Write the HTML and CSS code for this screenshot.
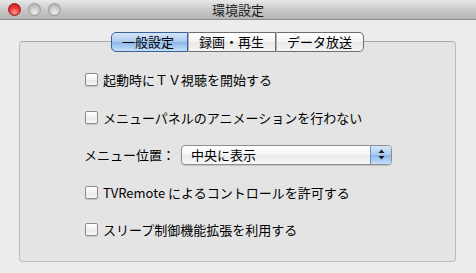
FILE: index.html
```html
<!DOCTYPE html>
<html lang="ja">
<head>
    <meta charset="UTF-8">
    <title>環境設定</title>
    <link rel="stylesheet" href="styles.css">
</head>
<body>

<div class="window">
    <div class="titlebar">
        <div class="lights">
            <span class="light close"></span>
            <span class="light"></span>
            <span class="light"></span>
        </div>
        <div class="title">環境設定</div>
        <div></div>
    </div>

    <div class="content">
        <div class="tabs">
            <span class="tab selected">一般設定</span>
            <span class="tab">録画・再生</span>
            <span class="tab">データ放送</span>
        </div>

        <div class="panel">
            <label class="row"><span class="check"></span>起動時にＴＶ視聴を開始する</label>
            <label class="row"><span class="check"></span>メニューパネルのアニメーションを行わない</label>
            <div class="row">
                <span class="field-label">メニュー位置：</span>
                <div class="popup">
                    <span class="popup-text">中央に表示</span>
                    <span class="popup-arrows">
                        <svg width="7" height="11" viewBox="0 0 7 11">
                            <path d="M3.5 0.5 L6.5 4 L0.5 4 Z" fill="#1a1a1a"/>
                            <path d="M0.5 7 L6.5 7 L3.5 10.5 Z" fill="#1a1a1a"/>
                        </svg>
                    </span>
                </div>
            </div>
            <label class="row"><span class="check"></span>TVRemote によるコントロールを許可する</label>
            <label class="row"><span class="check"></span>スリープ制御機能拡張を利用する</label>
        </div>
    </div>
</div>

</body>
</html>
```

FILE: styles.css
```css
body {
    margin: 0;
    background: #ececec;
    font-family: "Noto Sans CJK JP", "Noto Sans", sans-serif;
    font-size: 13px;
    color: #000;
}
.window {
    width: 476px;
    height: 273px;
    overflow: hidden;
}
.titlebar {
    display: grid;
    grid-template-columns: 1fr auto 1fr;
    align-items: center;
    height: 19px;
    background: linear-gradient(#e8e8e8, #c4c4c4 60%, #b5b5b5);
    border-bottom: 1px solid #8a8a8a;
}
.lights {
    display: flex;
    gap: 7px;
    padding-left: 8px;
}
.light {
    width: 13px;
    height: 13px;
    border-radius: 50%;
    box-sizing: border-box;
    border: 1px solid #9a9a9a;
    background: radial-gradient(circle at 50% 75%, #eeeeee 0%, #cdcdcd 45%, #a8a8a8 100%);
}
.light.close {
    border-color: #9c1c20;
    background: radial-gradient(circle at 50% 75%, #ff9c94 0%, #ee3b3b 45%, #c01418 100%);
}
.title {
    font-size: 13px;
    line-height: 19px;
    color: #1a1a1a;
}
.content {
    padding: 12px 20px 13px 19px;
}
.tabs {
    display: flex;
    justify-content: center;
    position: relative;
    z-index: 1;
}
.tab {
    height: 18px;
    line-height: 18px;
    padding: 0 10px;
    background: linear-gradient(#ffffff, #f4f4f4 50%, #e8e8e8 51%, #f6f6f6);
    border: 1px solid #6e6e6e;
    border-left: 1px solid #b0b0b0;
}
.tab:first-child {
    border-left: 1px solid #6e6e6e;
    border-radius: 5px 0 0 5px;
    width: 55px;
}
.tab:nth-child(2) {
    width: 66px;
}
.tab:last-child {
    border-radius: 0 5px 5px 0;
    width: 66px;
}
.tab.selected {
    background: linear-gradient(#d6e6f8, #a9c9ee 50%, #8ab6ea 51%, #c5dffa);
    border-color: #3b5f9a;
}
.panel {
    margin-top: -11px;
    height: 200px;
    padding: 19px 0 0 64px;
    background: #e4e4e4;
    border: 1px solid #bdbdbd;
    border-top-color: #a8a8a8;
    border-radius: 4px;
    display: flex;
    flex-direction: column;
}
.row {
    display: flex;
    align-items: center;
    height: 37.5px;
    flex: none;
    white-space: nowrap;
}
.check {
    width: 11px;
    height: 11px;
    margin: 0 5px 0 1px;
    border: 1px solid #8c8c8c;
    border-radius: 2px;
    background: linear-gradient(#ffffff, #f2f2f2 50%, #e6e6e6 51%, #f8f8f8);
    box-shadow: 0 1px 1px rgba(0, 0, 0, 0.15);
}
.field-label {
    width: 97px;
}
.popup {
    display: flex;
    width: 209px;
    height: 18px;
    border: 1px solid #8f8f8f;
    border-radius: 4px;
    background: linear-gradient(#ffffff, #f5f5f5 50%, #ebebeb 51%, #f7f7f7);
    box-shadow: 0 1px 1px rgba(0, 0, 0, 0.15);
    overflow: hidden;
}
.popup-text {
    flex: 1;
    line-height: 18px;
    padding-left: 9px;
}
.popup-arrows {
    width: 20px;
    display: flex;
    align-items: center;
    justify-content: center;
    border-left: 1px solid #6c8cc0;
    background: linear-gradient(#d6e6f8, #a9c9ee 50%, #8ab6ea 51%, #c5dffa);
}
```
